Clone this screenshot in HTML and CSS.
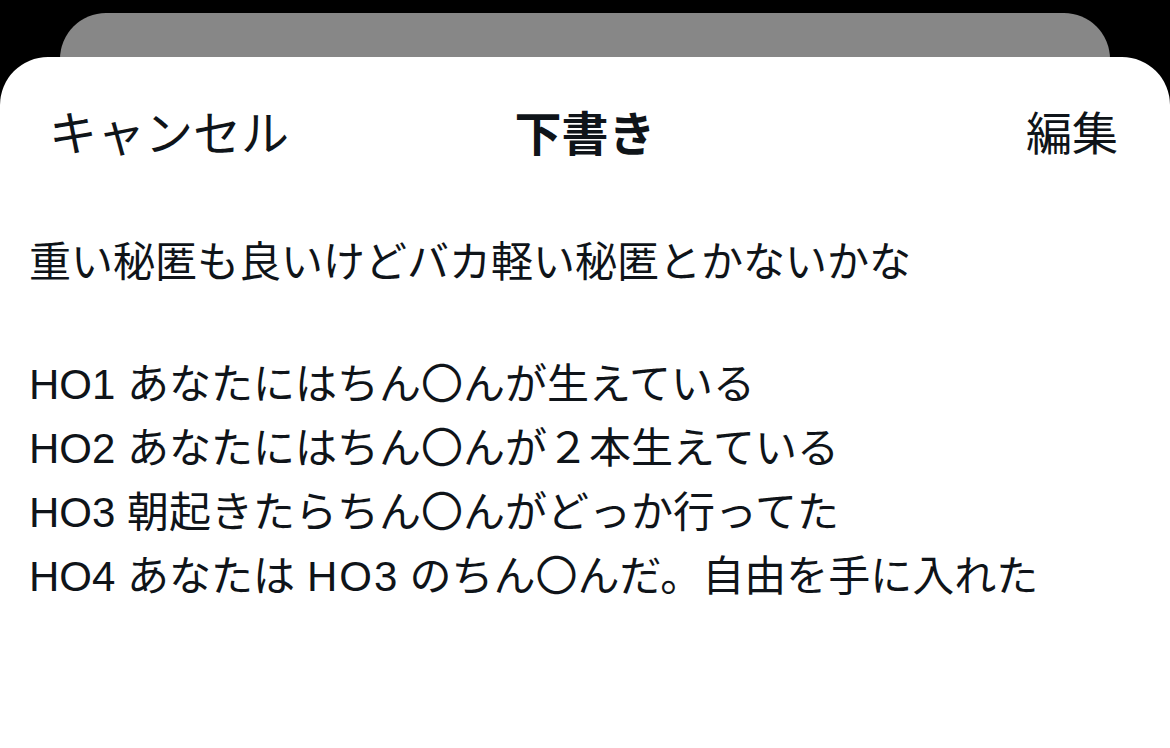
FILE: index.html
```html
<!DOCTYPE html>
<html lang="ja">
<head>
<meta charset="utf-8">
<link rel="stylesheet" href="styles.css">
</head>
<body>
<div class="screen">
  <div class="back-card"></div>
  <div class="sheet">
    <div class="header">
      <span class="cancel">キャンセル</span>
      <span class="title">下書き</span>
      <span class="edit">編集</span>
    </div>
    <div class="draft">
      <p class="line">重い秘匿も良いけどバカ軽い秘匿とかないかな</p>
      <p class="blank"></p>
      <p class="line">HO1 あなたにはちん〇んが生えている</p>
      <p class="line">HO2 あなたにはちん〇んが２本生えている</p>
      <p class="line">HO3 朝起きたらちん〇んがどっか行ってた</p>
      <p class="line">HO4 あなたは<span class="wide">HO3</span>のちん〇んだ。自由を手に入れた</p>
    </div>
  </div>
</div>
</body>
</html>
```
FILE: styles.css
```css
html, body {
  margin: 0;
  padding: 0;
  background: #000;
  width: 1170px;
  height: 748px;
  overflow: hidden;
}
.screen {
  display: flex;
  flex-direction: column;
  height: 748px;
  padding-top: 13px;
  box-sizing: border-box;
}
.back-card {
  margin: 0 60px;
  height: 80px;
  background: #878787;
  border-radius: 46px 46px 0 0;
  flex: none;
}
.sheet {
  margin-top: -36px;
  flex: 1;
  background: #fff;
  border-radius: 48px 48px 0 0;
  color: #0f1419;
  font-family: "Liberation Sans", "Noto Sans CJK JP", sans-serif;
}
.header {
  height: 146px;
  display: flex;
  align-items: center;
  justify-content: space-between;
  padding: 0 52px 0 49px;
  font-size: 46px;
  position: relative;
}
.cancel {
  font-size: 48px;
}
.title {
  font-weight: 700;
  font-size: 47px;
  position: absolute;
  left: 0;
  right: 0;
  text-align: center;
  pointer-events: none;
}
.draft {
  padding: 28px 30px 0 29px;
  font-size: 42px;
}
.line {
  margin: 0;
  line-height: 64px;
  white-space: nowrap;
}
.wide {
  padding: 0 10px 0 12px;
  letter-spacing: 2px;
}
.blank {
  margin: 0;
  height: 58px;
}
```
